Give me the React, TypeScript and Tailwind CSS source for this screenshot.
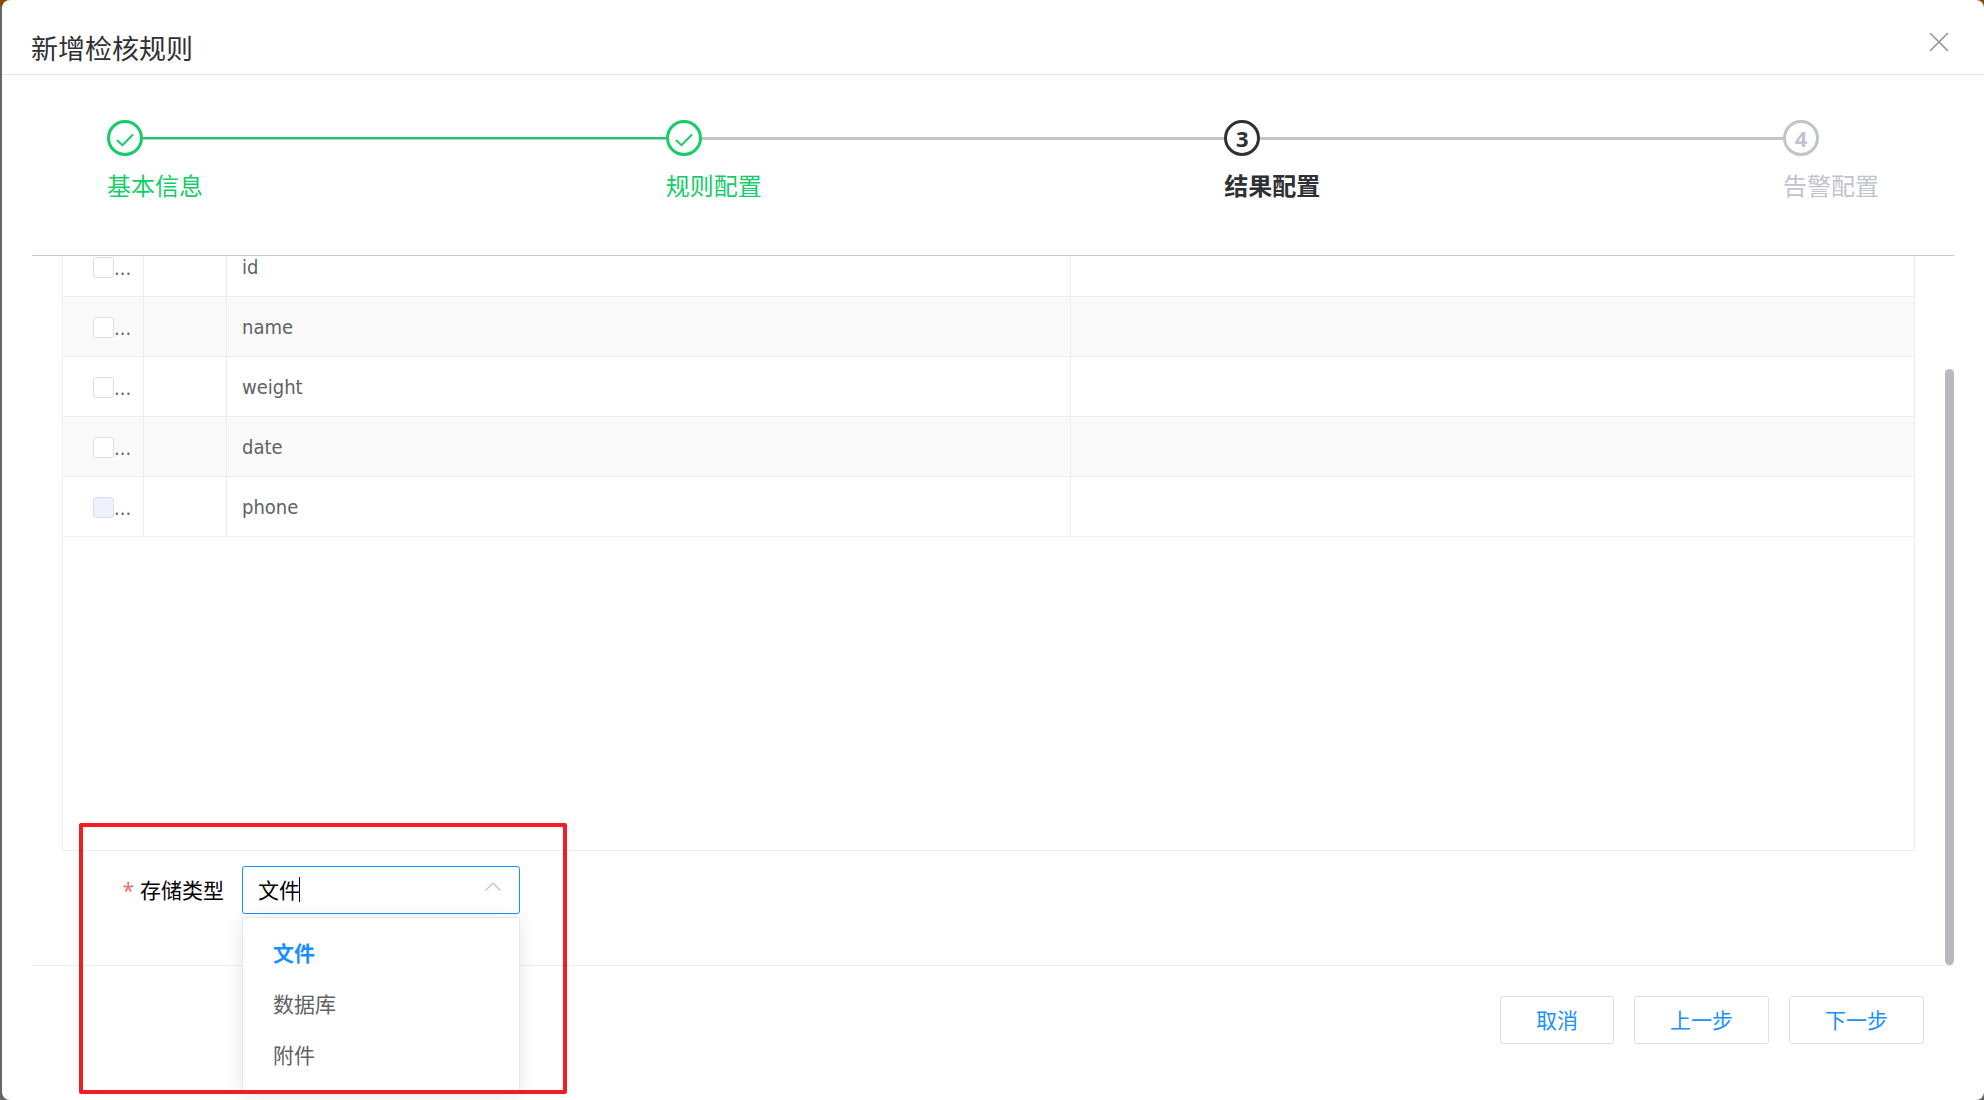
import { useState } from "react";
import { clsx } from "clsx";

type StepStatus = "done" | "active" | "pending";

const steps: { title: string; status: StepStatus }[] = [
  { title: "基本信息", status: "done" },
  { title: "规则配置", status: "done" },
  { title: "结果配置", status: "active" },
  { title: "告警配置", status: "pending" },
];

const fields = [
  { name: "id" },
  { name: "name" },
  { name: "weight" },
  { name: "date" },
  { name: "phone", disabled: true },
];

const storageTypes = ["文件", "数据库", "附件"];

const stepColors: Record<StepStatus, string> = {
  done: "text-[#13ce66]",
  active: "text-[#303133] font-bold",
  pending: "text-[#c0c4cc]",
};

function Steps() {
  return (
    <ol className="flex px-[105px] pt-[45px] pb-[51px]">
      {steps.map((step, i) => (
        <li
          key={step.title}
          className={clsx(
            i < steps.length - 1 && "flex-1",
            stepColors[step.status],
          )}
        >
          <div className="flex items-center">
            <span className="flex size-9 shrink-0 items-center justify-center rounded-full border-3 border-current text-[22px] leading-none font-bold">
              {step.status === "done" ? (
                <svg
                  viewBox="0 0 18 14"
                  className="mt-1 h-[14px] w-[18px]"
                  fill="none"
                  stroke="currentColor"
                  strokeWidth="2"
                  strokeLinecap="round"
                >
                  <path d="M1.5 7.5 6.5 12.2 16.5 2" />
                </svg>
              ) : (
                i + 1
              )}
            </span>
            {i < steps.length - 1 && (
              <span className="h-[3px] flex-1 bg-[#c0c4cc]">
                {i === 0 && <span className="block h-[2px] bg-[#13ce66]" />}
              </span>
            )}
          </div>
          <p className="mt-3 text-2xl leading-9">{step.title}</p>
        </li>
      ))}
    </ol>
  );
}

function FieldTable() {
  return (
    <div className="min-h-0 flex-1 overflow-hidden border-x border-b border-[#ebeef5]">
      <table className="-mt-[19px] w-full table-fixed border-separate border-spacing-0 font-['DejaVu_Sans_Condensed','Noto_Sans',sans-serif] text-xl text-[#606266]">
        <colgroup>
          <col className="w-[81px]" />
          <col className="w-[83px]" />
          <col />
          <col />
        </colgroup>
        <tbody>
          {fields.map((field, i) => (
            <tr key={field.name} className={clsx(i % 2 && "bg-[#fafafa]")}>
              <td className="h-[60px] border-r border-b border-[#ebeef5] pt-[2px] pl-[30px]">
                <label className="flex items-center">
                  <input
                    type="checkbox"
                    aria-label={field.name}
                    disabled={field.disabled}
                    className="size-[21px] shrink-0 appearance-none rounded-[3px] border border-[#dcdfe6] bg-white checked:bg-[#1890ff] disabled:bg-[#edf2fc]"
                  />
                  <span className="leading-5">...</span>
                </label>
              </td>
              <td className="border-r border-b border-[#ebeef5]" />
              <td className="border-r border-b border-[#ebeef5] px-[15px]">
                {field.name}
              </td>
              <td className="border-b border-[#ebeef5]" />
            </tr>
          ))}
        </tbody>
      </table>
    </div>
  );
}

function StorageSelect() {
  const [value, setValue] = useState("文件");

  return (
    <div className="relative w-[278px]">
      <input
        id="storage-type"
        role="combobox"
        aria-expanded="true"
        aria-controls="storage-options"
        readOnly
        value={value}
        className="block h-12 w-full rounded-[3px] border border-[#1890ff] bg-white px-[15px] pb-[2px] text-[21px] text-black outline-none"
      />
      {/* text cursor */}
      <span className="absolute top-[11px] left-[57px] h-[25px] w-px bg-black" />
      <svg
        viewBox="0 0 16 9"
        className="absolute top-4 right-[19px] h-[9px] w-4"
        fill="none"
        stroke="#c0c4cc"
        strokeWidth="1.4"
        strokeLinecap="round"
      >
        <path d="M1 8 8 1 15 8" />
      </svg>
      <ul
        id="storage-options"
        role="listbox"
        className="absolute top-[51px] left-0 z-10 w-full rounded-[3px] border border-[#e4e7ed] bg-white py-[10px] shadow-[0_2px_18px_rgba(0,0,0,0.1)]"
      >
        {storageTypes.map((type) => (
          <li key={type} role="option" aria-selected={type === value}>
            <button
              type="button"
              onClick={() => setValue(type)}
              className={clsx(
                "block h-[51px] w-full px-[30px] text-left text-[21px]",
                type === value ? "font-bold text-[#1890ff]" : "text-[#606266]",
              )}
            >
              {type}
            </button>
          </li>
        ))}
      </ul>
    </div>
  );
}

export default function App() {
  return (
    <div className="h-screen bg-[linear-gradient(to_bottom,#7d4f08_7px,#666_7px)] pl-[2px] font-['Noto_Sans','Noto_Sans_CJK_SC',sans-serif]">
      <section className="flex h-full flex-col rounded-lg bg-white">
        <header className="flex h-[75px] shrink-0 items-center justify-between border-b border-[#e4e5e7] pr-[35px] pl-[29px]">
          <h1 className="pt-6 text-[27px] leading-9 text-[#303133]">
            新增检核规则
          </h1>
          <button type="button" aria-label="关闭" className="pt-[10px]">
            <svg
              viewBox="0 0 20 20"
              className="size-5"
              fill="none"
              stroke="#909399"
              strokeWidth="1.6"
              strokeLinecap="round"
            >
              <path d="M1.5 1.5 18.5 18.5M18.5 1.5 1.5 18.5" />
            </svg>
          </button>
        </header>

        <Steps />

        <main className="relative mx-[30px] flex min-h-0 flex-1 flex-col border-t border-b border-t-[#c8c9cc] border-b-[#ebecee] px-[30px]">
          <div className="flex min-h-0 flex-1 flex-col pr-[9px]">
            <FieldTable />
          </div>
          <div className="relative flex h-[114px] shrink-0 items-start pt-[15px]">
            <label
              htmlFor="storage-type"
              className="w-[180px] pr-[18px] text-right text-[21px] leading-[48px] text-black"
            >
              <span className="mr-[6px] text-[#f56c6c]">*</span>
              存储类型
            </label>
            <StorageSelect />
            <div className="pointer-events-none absolute -top-[28px] left-[17px] z-20 h-[271px] w-[488px] rounded-xs border-4 border-[#f01d24]" />
          </div>
          <div className="absolute right-0 bottom-0 h-[596px] w-[9px] rounded-full bg-[#b8b9be]" />
        </main>

        <footer className="flex h-[134px] shrink-0 items-start justify-end gap-5 pt-[30px] pr-[60px]">
          {["取消", "上一步", "下一步"].map((text) => (
            <button
              key={text}
              type="button"
              className="h-12 rounded-[3px] border border-[#dcdfe6] bg-white px-[35px] pt-[2px] text-[21px] text-[#1890ff]"
            >
              {text}
            </button>
          ))}
        </footer>
      </section>
    </div>
  );
}
